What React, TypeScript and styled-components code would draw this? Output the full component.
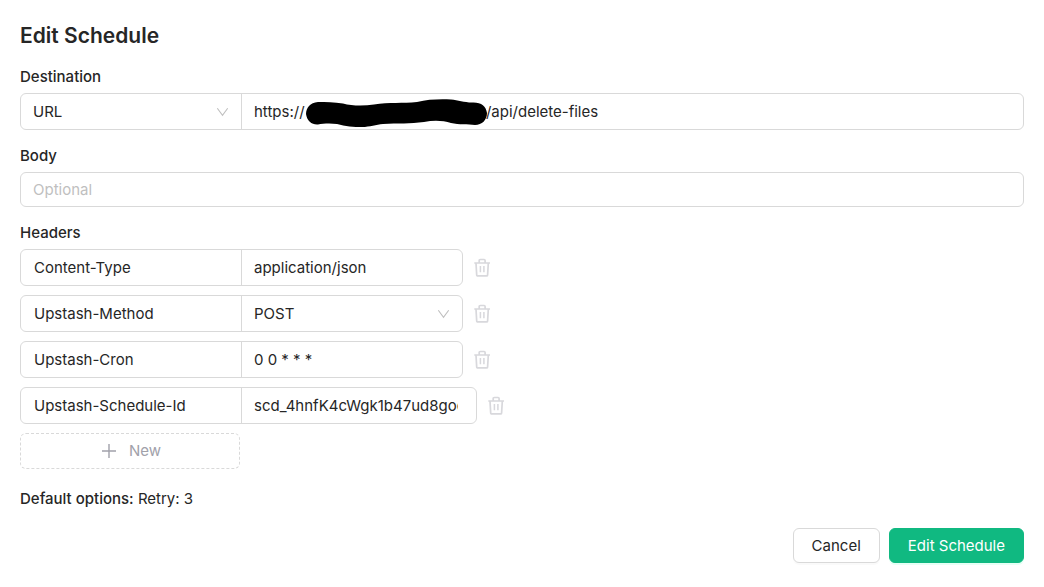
import React, { useState } from "react";
import styled, { createGlobalStyle } from "styled-components";

const GlobalStyle = createGlobalStyle`
  *, *::before, *::after { box-sizing: border-box; }
  body {
    margin: 0;
    background: #fff;
    color: #262626;
    font-family: Inter, "Liberation Sans", sans-serif;
    font-size: 15px;
    line-height: 24px;
  }
  input, select, button { font: inherit; color: inherit; }
`;

const BORDER = "#d9d9d9";

const Dialog = styled.form`
  padding: 22px 20px 24px;
`;

const Title = styled.h1`
  margin: 0 0 15px;
  font-size: 21px;
  line-height: 28px;
  font-weight: 600;
`;

const Fields = styled.div`
  display: flex;
  flex-direction: column;
  gap: 14px;
`;

const Field = styled.div`
  display: flex;
  flex-direction: column;
  gap: 4px;
`;

const Label = styled.label`
  font-weight: 500;
  align-self: flex-start;
`;

const Group = styled.div`
  display: flex;
  min-width: 0;
  height: 37px;
  border: 1px solid ${BORDER};
  border-radius: 6px;
  overflow: hidden;
`;

const Cell = styled.div<{ $width?: number; $divided?: boolean }>`
  position: relative;
  display: flex;
  min-width: 0;
  width: ${(p) => (p.$width ? `${p.$width}px` : "auto")};
  flex: ${(p) => (p.$width ? "0 1 auto" : "1 1 0")};
  border-left: ${(p) => (p.$divided ? `1px solid ${BORDER}` : "0")};
`;

const TextInput = styled.input<{ $inset?: number; $end?: number }>`
  flex: 1;
  width: 100%;
  min-width: 0;
  padding: 0 ${(p) => p.$end ?? 12}px 0 ${(p) => p.$inset ?? 12}px;
  border: 0;
  outline: 0;
  background: transparent;
`;

const BodyInput = styled.input`
  width: 100%;
  height: 35px;
  padding: 0 12px;
  border: 1px solid ${BORDER};
  border-radius: 6px;
  outline: 0;
  &::placeholder { color: #bfbfbf; opacity: 1; }
`;

const Select = styled.select`
  flex: 1;
  min-width: 0;
  padding: 0 32px 0 12px;
  border: 0;
  outline: 0;
  background: transparent;
  appearance: none;
`;

const Chevron = styled.svg`
  position: absolute;
  top: 50%;
  right: 12px;
  width: 13px;
  height: 12px;
  margin-top: -6px;
  pointer-events: none;
`;

const Redaction = styled.svg`
  position: absolute;
  top: 4px;
  left: 64px;
  width: 182px;
  height: 30px;
  pointer-events: none;
`;

const HeaderList = styled.div`
  display: flex;
  flex-direction: column;
  align-items: flex-start;
  gap: 9px;
`;

const HeaderRow = styled.div`
  display: flex;
  align-items: center;
  gap: 10px;
  max-width: 100%;
`;

const DeleteButton = styled.button`
  display: flex;
  padding: 0;
  border: 0;
  background: none;
  color: #d8d8dc;
  cursor: pointer;
`;

const NewButton = styled.button`
  display: flex;
  align-items: center;
  justify-content: center;
  gap: 12px;
  width: 220px;
  height: 36px;
  padding: 0 0 0 2px;
  border: 1px dashed ${BORDER};
  border-radius: 6px;
  background: #fff;
  color: #a1a1aa;
  cursor: pointer;
`;

const Defaults = styled.p`
  margin: 18px 0 17px;
  strong { font-weight: 500; }
`;

const Footer = styled.div`
  display: flex;
  justify-content: flex-end;
  gap: 9px;
`;

const Button = styled.button<{ $primary?: boolean }>`
  height: 35px;
  padding: 0 18px;
  border: 1px solid ${(p) => (p.$primary ? "#10b981" : BORDER)};
  border-radius: 6px;
  background: ${(p) => (p.$primary ? "#10b981" : "#fff")};
  color: ${(p) => (p.$primary ? "#fff" : "#262626")};
  box-shadow: 0 2px 0 ${(p) => (p.$primary ? "rgba(5, 255, 155, 0.1)" : "rgba(0, 0, 0, 0.02)")};
  cursor: pointer;
`;

const DownIcon = () => (
  <Chevron viewBox="0 0 13 12" fill="none" stroke="#bfbfbf" strokeWidth="1.1" aria-hidden>
    <path d="M1.3 2.2 6.5 9.4 11.7 2.2" />
  </Chevron>
);

const TrashIcon = () => (
  <svg width="18" height="20" viewBox="0 0 18 20" fill="none" stroke="currentColor" strokeWidth="1.7" aria-hidden>
    <path d="M1.3 5H17M6.2 5V2.5a1 1 0 0 1 1-1h3.900a1 1 0 0 1 1 1V5M3 5.200l.7 11.700a1 1 0 0 0 1 1h8.900a1 1 0 0 0 1-1l.7-11.700" />
    <path d="M7.400 8v6.300M10.900 8v6.300" strokeWidth="1.500" />
  </svg>
);

const PlusIcon = () => (
  <svg width="16" height="16" viewBox="0 0 16 16" stroke="currentColor" strokeWidth="1.4" aria-hidden>
    <path d="M8 1v14M1 8h14" />
  </svg>
);

// The host part of the address is left blank and inked over.
const HIDDEN_HOST = "\u2003".repeat(12) + "\u200A";

interface Header {
  name: string;
  value: string;
  options?: string[];
  width?: number;
  end?: number;
}

const initialHeaders: Header[] = [
  { name: "Content-Type", value: "application/json" },
  { name: "Upstash-Method", value: "POST", options: ["POST", "GET", "PUT", "PATCH", "DELETE"] },
  { name: "Upstash-Cron", value: "0 0 * * *" },
  { name: "Upstash-Schedule-Id", value: "scd_4hnfK4cWgk1b47ud8goc", width: 235, end: 18 },
];

export default function App() {
  const [headers, setHeaders] = useState(initialHeaders);

  return (
    <>
      <GlobalStyle />
      <Dialog onSubmit={(e) => e.preventDefault()}>
        <Title>Edit Schedule</Title>
        <Fields>
          <Field>
            <Label htmlFor="destination">Destination</Label>
            <Group>
              <Cell $width={220}>
                <Select aria-label="Destination type" defaultValue="URL">
                  <option>URL</option>
                  <option>Topic</option>
                </Select>
                <DownIcon />
              </Cell>
              <Cell $divided>
                <TextInput id="destination" defaultValue={`https://${HIDDEN_HOST}/api/delete-files`} />
                <Redaction viewBox="0 0 182 30" aria-hidden>
                  <path d="M12 4C4 4.500 0 10 0 16C1 23 6 27 12 26.500C17 25.500 24 25 31 26C39 28.500 48 29 56 29C64 29 70 26.500 77 26C92 25 104 26 118 24C128 22 137 22.500 145 25C153 27 162 26 169 27C176 27 181 22 181 15C180 8 175 4 166 4.500C158 4.500 152 2 145 1.500C132 1 122 1.500 111 4C97 5.500 83 4 68 6.500C58 8 46 8 37 5.500C28 4 20 4 12 4Z" />
                </Redaction>
              </Cell>
            </Group>
          </Field>

          <Field>
            <Label htmlFor="body">Body</Label>
            <BodyInput id="body" placeholder="Optional" />
          </Field>

          <Field>
            <Label as="span" id="headers-label">Headers</Label>
            <HeaderList role="group" aria-labelledby="headers-label">
              {headers.map((h, i) => (
                <HeaderRow key={i}>
                  <Group>
                    <Cell $width={220}>
                      <TextInput $inset={13} aria-label="Header name" defaultValue={h.name} />
                    </Cell>
                    <Cell $width={h.width ?? 221} $divided>
                      {h.options ? (
                        <>
                          <Select aria-label={h.name} defaultValue={h.value}>
                            {h.options.map((o) => (
                              <option key={o}>{o}</option>
                            ))}
                          </Select>
                          <DownIcon />
                        </>
                      ) : (
                        <TextInput $end={h.end} aria-label={h.name} defaultValue={h.value} />
                      )}
                    </Cell>
                  </Group>
                  <DeleteButton type="button" aria-label={`Delete ${h.name}`}>
                    <TrashIcon />
                  </DeleteButton>
                </HeaderRow>
              ))}
              <NewButton type="button" onClick={() => setHeaders([...headers, { name: "", value: "" }])}>
                <PlusIcon />
                New
              </NewButton>
            </HeaderList>
          </Field>
        </Fields>
        <Defaults>
          <strong>Default options:</strong> Retry: 3
        </Defaults>
        <Footer>
          <Button type="button">Cancel</Button>
          <Button type="submit" $primary>Edit Schedule</Button>
        </Footer>
      </Dialog>
    </>
  );
}
